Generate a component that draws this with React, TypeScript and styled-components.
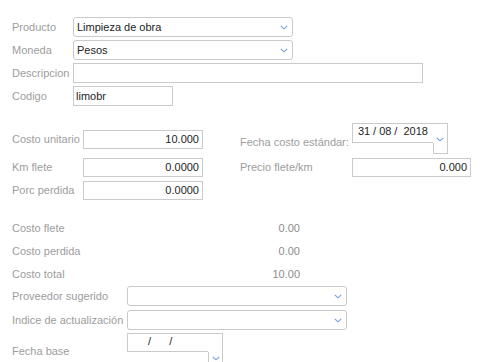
import React from 'react'
import styled, { createGlobalStyle } from 'styled-components'

const GlobalStyle = createGlobalStyle`
  body {
    margin: 0;
    background: #fff;
    font-family: 'Liberation Sans', Arial, sans-serif;
    font-size: 11px;
  }
`

const Page = styled.div`
  padding: 17px 0 0 12px;
`

const Section = styled.div<{ $mt?: number }>`
  display: flex;
  flex-direction: column;
  margin-top: ${p => p.$mt ?? 0}px;
`

const Row = styled.div<{ $mt?: number; $end?: boolean }>`
  display: flex;
  align-items: ${p => (p.$end ? 'flex-end' : 'center')};
  margin-top: ${p => p.$mt ?? 0}px;
`

const Pair = styled.div<{ $ml?: number; $mb?: number; $end?: boolean }>`
  display: flex;
  align-items: ${p => (p.$end ? 'flex-end' : 'center')};
  margin-left: ${p => p.$ml ?? 0}px;
  margin-bottom: ${p => p.$mb ?? 0}px;
`

const Label = styled.label<{ $w: number; $mb?: number }>`
  flex: none;
  width: ${p => p.$w}px;
  margin-bottom: ${p => p.$mb ?? 0}px;
  color: #9d9d9d;
  font-size: 11px;
  line-height: 13px;
  white-space: nowrap;
`

const TextBox = styled.div<{ $w: number; $h?: number; $right?: boolean }>`
  box-sizing: border-box;
  width: ${p => p.$w}px;
  height: ${p => p.$h ?? 19}px;
  border: 1px solid #cacaca;
  padding: 0 3px 0 2px;
  color: #1e1e1e;
  font-size: 11px;
  line-height: ${p => (p.$h ?? 19) - 2}px;
  text-align: ${p => (p.$right ? 'right' : 'left')};
  white-space: nowrap;
`

const SelectBox = styled.div<{ $w: number }>`
  box-sizing: border-box;
  display: flex;
  align-items: center;
  justify-content: space-between;
  width: ${p => p.$w}px;
  height: 20px;
  border: 1px solid #cacaca;
  border-radius: 3px;
  padding: 0 4px 0 3px;
  color: #1e1e1e;
  font-size: 11px;
`

const DateField = styled.div<{ $h: number }>`
  display: flex;
  height: ${p => p.$h}px;
`

const DateText = styled.div<{ $h: number }>`
  box-sizing: border-box;
  width: 81px;
  height: ${p => p.$h}px;
  border: 1px solid #cacaca;
  border-right: none;
  padding: 1px 0 0 5px;
  color: #1e1e1e;
  font-size: 11px;
  line-height: 13px;
  white-space: pre;
`

const DateSeg = styled.span`
  display: inline-block;
  width: 12px;
`

const DateSide = styled.div`
  display: flex;
  flex-direction: column;
  width: 15px;
`

const DateSideTop = styled.div<{ $h: number }>`
  box-sizing: border-box;
  height: ${p => p.$h}px;
  border-top: 1px solid #cacaca;
  border-right: 1px solid #cacaca;
  display: flex;
  align-items: flex-end;
  justify-content: center;
  padding-bottom: 1px;
`

const DateSideBottom = styled.div`
  box-sizing: border-box;
  flex: 1;
  border: 1px solid #cacaca;
  border-top: none;
  display: flex;
  justify-content: center;
  padding-top: 4px;
`

const ValueRow = styled.div`
  display: flex;
  align-items: center;
  justify-content: space-between;
  width: 288px;
  height: 23px;
`

const Value = styled.span`
  color: #8c8c8c;
  font-size: 11px;
  line-height: 13px;
`

const Chevron = () => (
  <svg width="8" height="5" viewBox="0 0 8 5">
    <path d="M0.8 0.8 L4 3.8 L7.2 0.8" fill="none" stroke="#6f9fd9" strokeWidth="1.1" />
  </svg>
)

const Select: React.FC<{ w: number; value?: string }> = ({ w, value }) => (
  <SelectBox $w={w}>
    <span>{value}</span>
    <Chevron />
  </SelectBox>
)

const DateInput: React.FC<{ day?: string; month?: string; year?: string; textH: number; h: number; low?: boolean }> = ({
  day = '',
  month = '',
  year = '',
  textH,
  h,
  low,
}) => (
  <DateField $h={h}>
    <DateText $h={textH}>
      <DateSeg>{day}</DateSeg>
      {' / '}
      <DateSeg>{month}</DateSeg>
      {' /  '}
      {year}
    </DateText>
    <DateSide>
      <DateSideTop $h={textH}>{!low && <Chevron />}</DateSideTop>
      <DateSideBottom>{low && <Chevron />}</DateSideBottom>
    </DateSide>
  </DateField>
)

export default function App() {
  return (
    <Page>
      <GlobalStyle />
      <Section>
        <Row>
          <Label $w={61}>Producto</Label>
          <Select w={220} value="Limpieza de obra" />
        </Row>
        <Row $mt={3}>
          <Label $w={61}>Moneda</Label>
          <Select w={220} value="Pesos" />
        </Row>
        <Row $mt={3}>
          <Label $w={61}>Descripcion</Label>
          <TextBox $w={350} $h={20} />
        </Row>
        <Row $mt={3}>
          <Label $w={61}>Codigo</Label>
          <TextBox $w={100} $h={20}>limobr</TextBox>
        </Row>
      </Section>

      <Section $mt={17}>
        <Row $end>
          <Pair $mb={5}>
            <Label $w={71}>Costo unitario</Label>
            <TextBox $w={120} $right>10.000</TextBox>
          </Pair>
          <Pair $ml={37} $end>
            <Label $w={112} $mb={5}>Fecha costo estándar:</Label>
            <DateInput day="31" month="08" year="2018" textH={20} h={31} />
          </Pair>
        </Row>
        <Row $mt={4}>
          <Pair>
            <Label $w={71}>Km flete</Label>
            <TextBox $w={120} $right>0.0000</TextBox>
          </Pair>
          <Pair $ml={37}>
            <Label $w={112}>Precio flete/km</Label>
            <TextBox $w={119} $right>0.000</TextBox>
          </Pair>
        </Row>
        <Row $mt={4}>
          <Label $w={71}>Porc perdida</Label>
          <TextBox $w={120} $right>0.0000</TextBox>
        </Row>
      </Section>

      <Section $mt={17}>
        <ValueRow>
          <Label $w={120}>Costo flete</Label>
          <Value>0.00</Value>
        </ValueRow>
        <ValueRow>
          <Label $w={120}>Costo perdida</Label>
          <Value>0.00</Value>
        </ValueRow>
        <ValueRow>
          <Label $w={120}>Costo total</Label>
          <Value>10.00</Value>
        </ValueRow>
      </Section>

      <Section>
        <Row>
          <Label $w={115}>Proveedor sugerido</Label>
          <Select w={220} />
        </Row>
        <Row $mt={4}>
          <Label $w={115}>Indice de actualización</Label>
          <Select w={220} />
        </Row>
        <Row $mt={3} $end>
          <Label $w={115} $mb={5}>Fecha base</Label>
          <DateInput textH={19} h={30} low />
        </Row>
      </Section>
    </Page>
  )
}
